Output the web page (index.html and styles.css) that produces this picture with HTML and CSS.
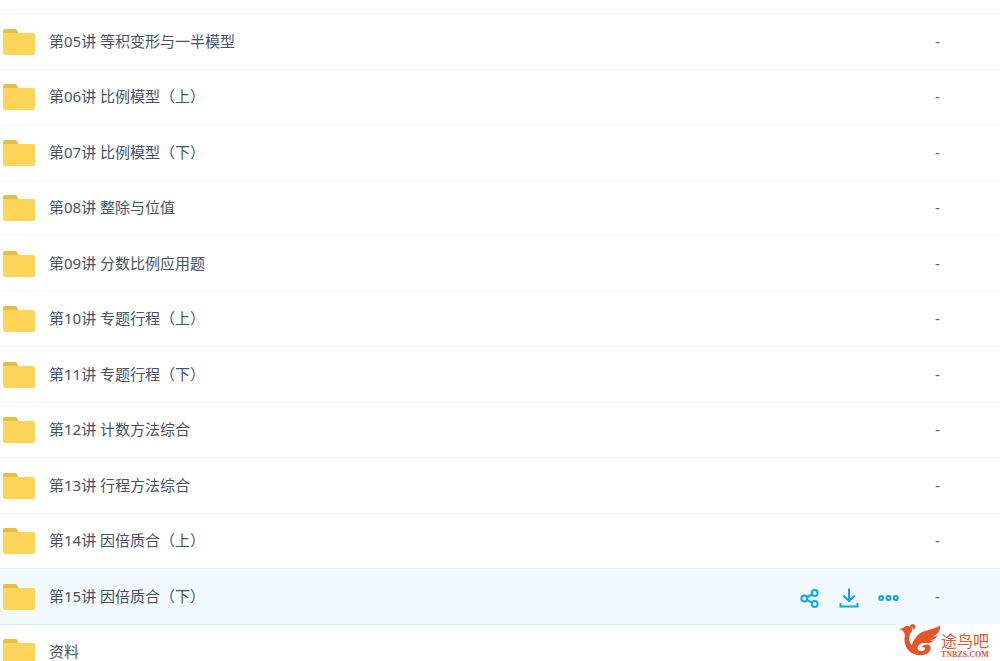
FILE: index.html
```html
<!DOCTYPE html>
<html lang="zh-CN">
<head>
<meta charset="utf-8">
<title>文件列表</title>
<link rel="stylesheet" href="styles.css">
</head>
<body>
<svg class="defs" aria-hidden="true">
  <symbol id="folder" viewBox="0 0 32 26">
    <path d="M0 2Q0 0 2 0H12.500Q13.500 0 14 1L16 5V10H0Z" fill="#e6be4a"/>
    <path d="M0 4H30Q32 4 32 6V24Q32 26 30 26H2Q0 26 0 24Z" fill="#ffd559"/>
  </symbol>
</svg>
<main class="files">
  <table class="list">
    <tbody>
      <tr class="row"><td class="name"><a class="file" href="#"><svg class="folder"><use href="#folder"/></svg><span class="label">第05讲 等积变形与一半模型</span></a></td><td class="tools"></td><td class="size">-</td></tr>
      <tr class="row"><td class="name"><a class="file" href="#"><svg class="folder"><use href="#folder"/></svg><span class="label">第06讲 比例模型（上）</span></a></td><td class="tools"></td><td class="size">-</td></tr>
      <tr class="row"><td class="name"><a class="file" href="#"><svg class="folder"><use href="#folder"/></svg><span class="label">第07讲 比例模型（下）</span></a></td><td class="tools"></td><td class="size">-</td></tr>
      <tr class="row"><td class="name"><a class="file" href="#"><svg class="folder"><use href="#folder"/></svg><span class="label">第08讲 整除与位值</span></a></td><td class="tools"></td><td class="size">-</td></tr>
      <tr class="row"><td class="name"><a class="file" href="#"><svg class="folder"><use href="#folder"/></svg><span class="label">第09讲 分数比例应用题</span></a></td><td class="tools"></td><td class="size">-</td></tr>
      <tr class="row"><td class="name"><a class="file" href="#"><svg class="folder"><use href="#folder"/></svg><span class="label">第10讲 专题行程（上）</span></a></td><td class="tools"></td><td class="size">-</td></tr>
      <tr class="row"><td class="name"><a class="file" href="#"><svg class="folder"><use href="#folder"/></svg><span class="label">第11讲 专题行程（下）</span></a></td><td class="tools"></td><td class="size">-</td></tr>
      <tr class="row"><td class="name"><a class="file" href="#"><svg class="folder"><use href="#folder"/></svg><span class="label">第12讲 计数方法综合</span></a></td><td class="tools"></td><td class="size">-</td></tr>
      <tr class="row"><td class="name"><a class="file" href="#"><svg class="folder"><use href="#folder"/></svg><span class="label">第13讲 行程方法综合</span></a></td><td class="tools"></td><td class="size">-</td></tr>
      <tr class="row"><td class="name"><a class="file" href="#"><svg class="folder"><use href="#folder"/></svg><span class="label">第14讲 因倍质合（上）</span></a></td><td class="tools"></td><td class="size">-</td></tr>
      <tr class="row active">
        <td class="name"><a class="file" href="#"><svg class="folder"><use href="#folder"/></svg><span class="label">第15讲 因倍质合（下）</span></a></td>
        <td class="tools">
          <div class="actions">
            <button class="action" type="button" aria-label="分享">
              <svg viewBox="0 0 20 20"><circle cx="4.300" cy="10.500" r="2.900"/><circle cx="14.700" cy="5" r="2.900"/><circle cx="14.700" cy="16" r="2.900"/><path d="M7 9L12 6.300M7 12L12 14.700"/></svg>
            </button>
            <button class="action" type="button" aria-label="下载">
              <svg viewBox="0 0 20 20"><path d="M10 0.500V13M4.300 7.500L10 13L15.700 7.500M1.500 15V18.500H18.500V15"/></svg>
            </button>
            <button class="action" type="button" aria-label="更多">
              <svg class="more" viewBox="0 0 22 20"><circle cx="3.200" cy="10" r="2"/><circle cx="10.500" cy="10" r="2"/><circle cx="17.800" cy="10" r="2"/></svg>
            </button>
          </div>
        </td>
        <td class="size">-</td>
      </tr>
      <tr class="row"><td class="name"><a class="file" href="#"><svg class="folder"><use href="#folder"/></svg><span class="label">资料</span></a></td><td class="tools"></td><td class="size"></td></tr>
    </tbody>
  </table>
</main>
<div class="brand">
  <svg class="bird" viewBox="0 0 42 32" aria-hidden="true">
    <path d="M0 5Q4 4.500 6 2.500Q9 1 11 3Q11 0 14 0Q17 .5 16.500 3.500Q15.500 6 13.500 5Q14.500 3 12.500 3.500Q14 6 12 8.500C9.500 12 9.500 17 12.500 21.500Q14 16 18.500 11.500C24 5.500 33 6.500 41.500 1.500Q41.500 9 34 12.500Q38 12 39 11Q36 16 30.500 16.500Q34 17 35.500 16Q33 19.500 27 19C22 18.500 18.500 21 18.500 24Q19 27 22 27Q26 27 26 24.500Q25.500 22.500 22.500 23.500Q24.500 20 28.500 20.500Q32.500 21.500 31.500 25.500C29.500 31 22 32.500 16 30.500C8 28 5 20 5.500 14Q6.500 10 4.500 7.500Q3 5.500 0 5Z" fill="#e4572b"/>
  </svg>
  <div class="brand-text"><span class="brand-name">途鸟吧</span><span class="brand-site">TNBZS.COM</span></div>
</div>
</body>
</html>
```
FILE: styles.css
```css
body {
  margin: 0;
  background: #fff;
  color: #465269;
  font-family: "Liberation Sans", "Noto Sans CJK SC", sans-serif;
  font-size: 15px;
  line-height: 20px;
}

.defs {
  position: absolute;
  width: 0;
  height: 0;
}

.files {
  box-sizing: border-box;
  height: 100vh;
  padding-top: 13px;
  overflow: hidden;
}

.list {
  width: 100%;
  table-layout: fixed;
  border-spacing: 0;
}

.row {
  height: 55px;
}

.row:nth-child(odd) {
  height: 56px;
}

.row td {
  padding: 0;
  border-top: 1px solid #f5f6f8;
}

.file {
  display: flex;
  align-items: center;
  gap: 14px;
  padding-left: 3px;
  color: inherit;
  font-family: "Noto Sans", "Noto Sans CJK SC", sans-serif;
  text-decoration: none;
}

.folder {
  flex: none;
  width: 32px;
  height: 26px;
}

.label {
  padding-bottom: 2px;
}

.row .tools {
  width: 135px;
}

.row .size {
  width: 65px;
  color: #5c6270;
}

.active td {
  background: #f3faff;
}

.row.active td,
.active + .row td {
  border-top-color: #d8edfa;
}

.actions {
  display: flex;
  gap: 19px;
  padding-top: 3px;
}

.action {
  padding: 0;
  border: 0;
  background: none;
  cursor: pointer;
}

.action svg {
  display: block;
  width: 20px;
  height: 20px;
  fill: none;
  stroke: #0aa5f5;
  stroke-width: 2;
}

.action .more {
  width: 22px;
}

.brand {
  position: fixed;
  right: 0;
  bottom: 0;
  display: flex;
  box-sizing: border-box;
  width: 104px;
  height: 37px;
  padding-left: 3px;
  background: #fff;
  color: #e4572b;
}

.bird {
  flex: none;
  width: 42px;
  height: 32px;
}

.brand-text {
  display: flex;
  flex-direction: column;
  padding-top: 8px;
  white-space: nowrap;
}

.brand-name {
  font-family: "Noto Sans CJK SC", sans-serif;
  font-size: 16px;
  font-weight: 400;
  line-height: 16px;
}

.brand-site {
  padding-top: 3px;
  font-family: "Liberation Serif", serif;
  font-size: 8px;
  font-weight: 700;
  line-height: 8px;
}
```
